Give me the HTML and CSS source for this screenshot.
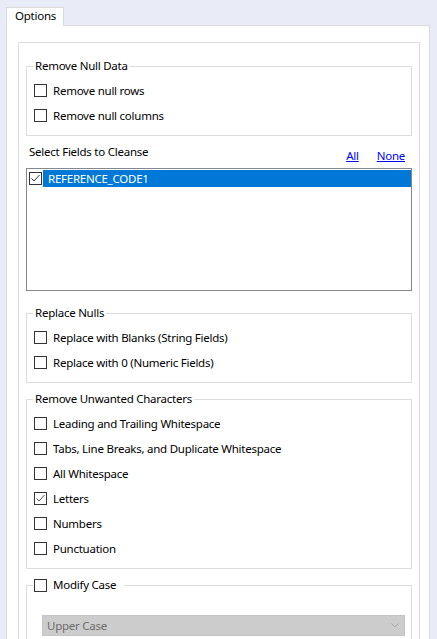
FILE: index.html
```html
<!DOCTYPE html>
<html>
<head>
<meta charset="utf-8">
<link rel="stylesheet" href="styles.css">
</head>
<body>
<div class="tabs"><div class="tab">Options</div></div>
<div class="page">
  <div class="panel">
    <div class="group">
      <div class="legend">Remove Null Data</div>
      <div class="rows">
        <div class="row"><span class="cb"></span><span>Remove null rows</span></div>
        <div class="row"><span class="cb"></span><span>Remove null columns</span></div>
      </div>
    </div>

    <div class="fields-head">
      <span class="fields-label">Select Fields to Cleanse</span>
      <span class="links"><a href="#">All</a><a href="#">None</a></span>
    </div>
    <div class="listbox">
      <div class="item">
        <span class="cb checked"><svg width="11" height="11" viewBox="0 0 11 11"><polyline points="1.5,5.5 4,8 9.5,2" fill="none" stroke="#333" stroke-width="1"/></svg></span>
        <span class="item-text">REFERENCE_CODE1</span>
      </div>
    </div>

    <div class="group g-gap-lg">
      <div class="legend">Replace Nulls</div>
      <div class="rows">
        <div class="row"><span class="cb"></span><span>Replace with Blanks (String Fields)</span></div>
        <div class="row"><span class="cb"></span><span>Replace with 0 (Numeric Fields)</span></div>
      </div>
    </div>

    <div class="group g-gap">
      <div class="legend">Remove Unwanted Characters</div>
      <div class="rows">
        <div class="row"><span class="cb"></span><span>Leading and Trailing Whitespace</span></div>
        <div class="row"><span class="cb"></span><span>Tabs, Line Breaks, and Duplicate Whitespace</span></div>
        <div class="row"><span class="cb"></span><span>All Whitespace</span></div>
        <div class="row"><span class="cb checked"><svg width="11" height="11" viewBox="0 0 11 11"><polyline points="1.5,5.5 4,8 9.5,2" fill="none" stroke="#555" stroke-width="1"/></svg></span><span>Letters</span></div>
        <div class="row"><span class="cb"></span><span>Numbers</span></div>
        <div class="row"><span class="cb"></span><span>Punctuation</span></div>
      </div>
    </div>

    <div class="group g-gap g-last">
      <div class="legend legend-cb"><span class="cb"></span><span>Modify Case</span></div>
      <div class="select">
        <span>Upper Case</span>
        <svg class="chev" width="8" height="5" viewBox="0 0 8 5"><polyline points="0.5,0.5 4,4 7.5,0.5" fill="none" stroke="#a8a8a8" stroke-width="1"/></svg>
      </div>
    </div>
  </div>
</div>
</body>
</html>
```

FILE: styles.css
```css
* { box-sizing: border-box; }
html, body {
  margin: 0;
  padding: 0;
}
body {
  background: #e9ecf7;
  font-family: "Noto Sans", "Open Sans", sans-serif;
  font-size: 11.5px;
  letter-spacing: -0.25px;
  color: #000;
  height: 639px;
  overflow: hidden;
}
.tabs {
  display: flex;
  padding: 7px 0 0 6px;
}
.tab {
  position: relative;
  z-index: 1;
  width: 58px;
  height: 19px;
  margin-bottom: -1px;
  background: #fff;
  border: 1px solid #d9d9d9;
  border-bottom: none;
  padding-left: 8px;
  line-height: 16px;
}
.page {
  margin: 0 7px 0 6px;
  border: 1px solid #d9d9d9;
  background: #fff;
  padding: 16px 9px 0 11px;
  height: 700px;
}
.panel {
  border: 1px solid #dcdcdc;
  padding: 23px 7px 0 7px;
  height: 700px;
}
.group {
  border: 1px solid #dcdcdc;
  padding: 0 7px 7px 7px;
}
.g-gap-lg { margin-top: 22px; }
.g-gap { margin-top: 16px; }
.legend {
  width: fit-content;
  height: 16px;
  line-height: 16px;
  margin: -9px 0 0 -1px;
  padding: 0 2px;
  background: #fff;
}
.legend-cb {
  display: flex;
  align-items: center;
  gap: 6px;
  padding: 0 8px 0 1px;
}
.rows { margin-top: 4px; }
.row {
  height: 25px;
  display: flex;
  align-items: center;
  gap: 6px;
}
.cb {
  flex: none;
  width: 13px;
  height: 13px;
  border: 1px solid #333;
  background: #fff;
  display: flex;
  align-items: center;
  justify-content: center;
}
.cb svg { display: block; }
.fields-head {
  display: flex;
  margin-top: 8px;
  height: 24px;
  padding-left: 3px;
  line-height: 16px;
}
.links {
  margin-left: auto;
  margin-right: 7px;
  padding-top: 4px;
  display: flex;
  gap: 18px;
}
.links a {
  color: #0000ff;
  text-decoration: underline;
}
.listbox {
  height: 123px;
  border: 1px solid #828790;
  padding: 1px 0 0 1px;
}
.item {
  height: 17px;
  display: flex;
  align-items: center;
}
.item .cb { margin-left: 1px; }
.item-text {
  flex: 1;
  height: 17px;
  line-height: 17px;
  margin-left: 1px;
  padding-left: 5px;
  background: #0078d7;
  color: #fff;
}
.select {
  margin: 22px -1px 0 8px;
  height: 21px;
  background: #cccccc;
  border: 1px solid #c4c4c4;
  padding: 0 5px 0 4px;
  color: #6d6d6d;
  display: flex;
  align-items: center;
  justify-content: space-between;
  line-height: 19px;
}
```
